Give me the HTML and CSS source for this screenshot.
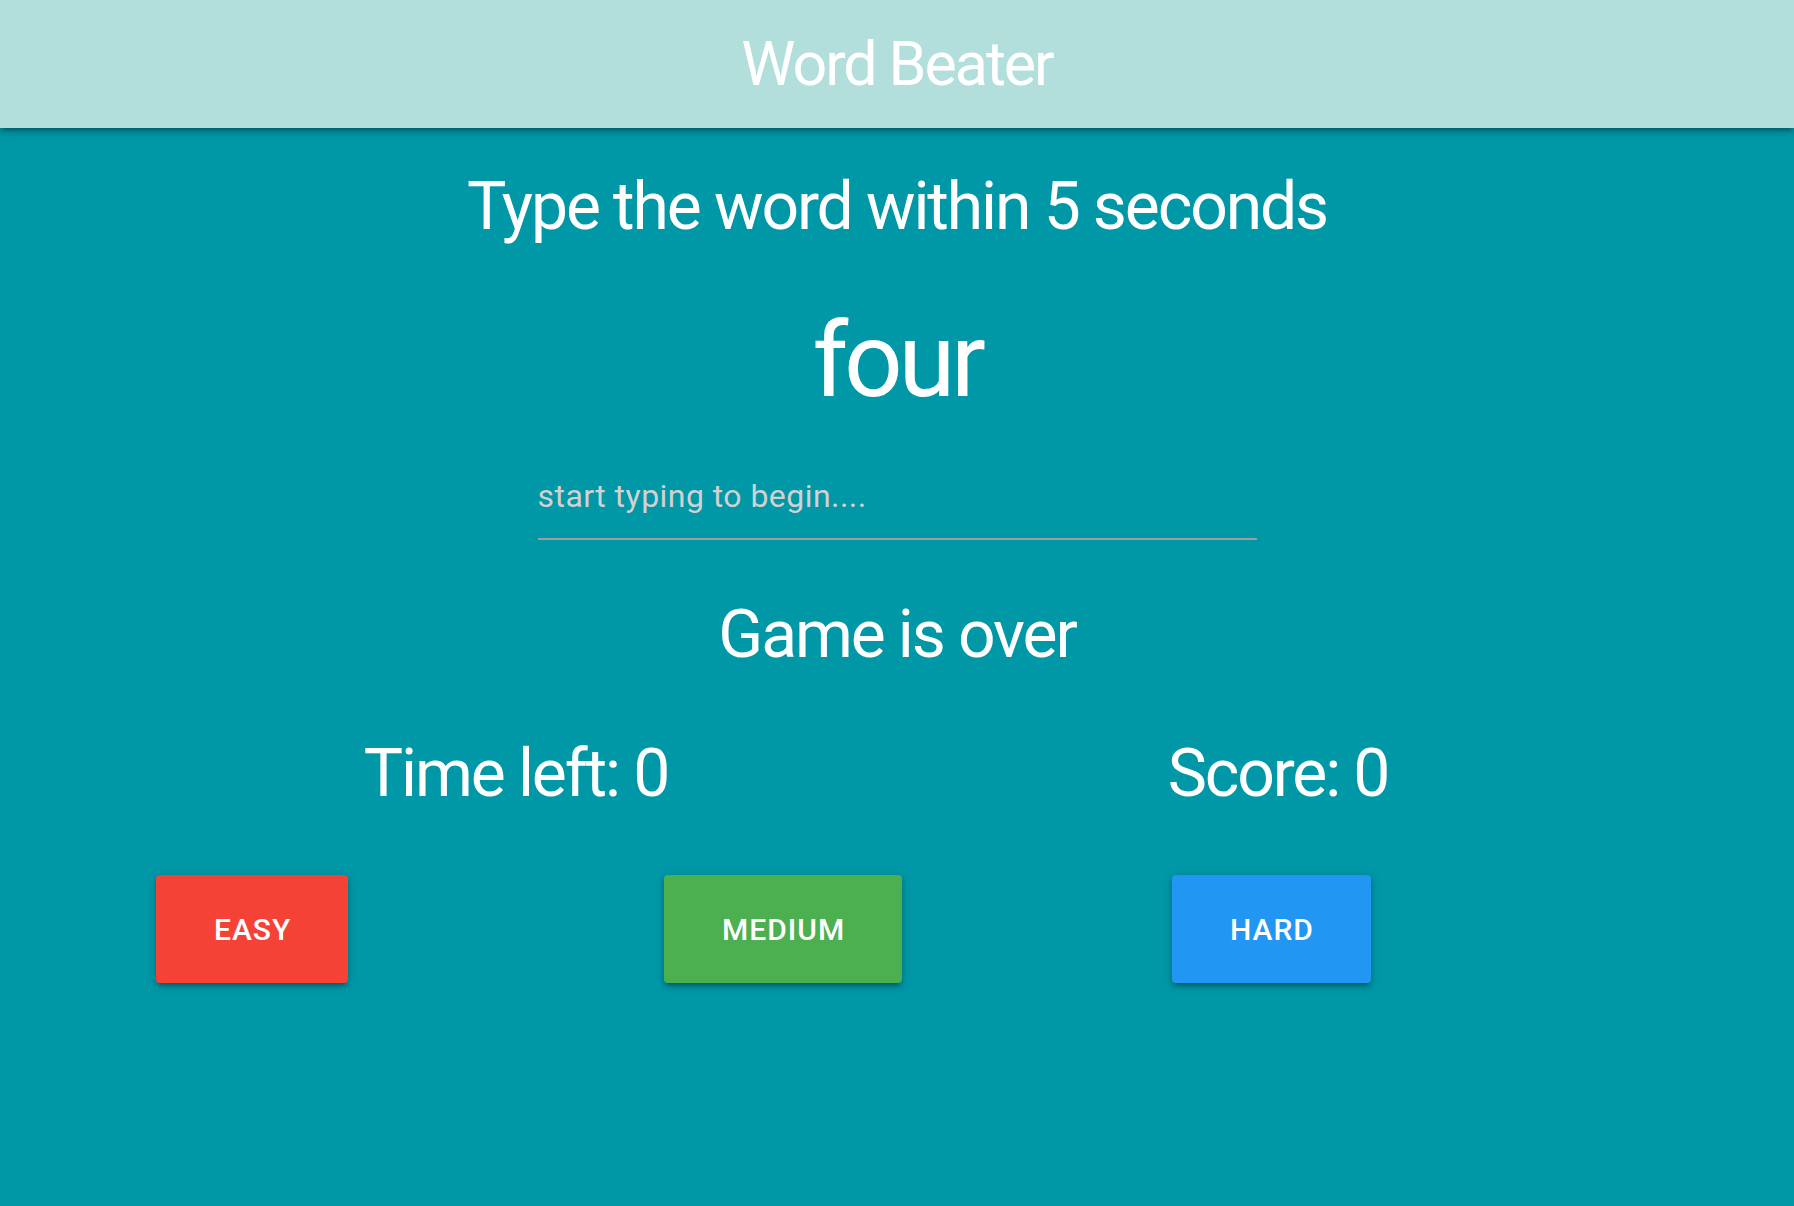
FILE: index.html
```html
<!DOCTYPE html>
<html lang="en">
<head>
<meta charset="utf-8">
<title>Word Beater</title>
<link rel="stylesheet" href="styles.css">
</head>
<body>
<header class="topbar">
  <div class="brand">Word Beater</div>
</header>
<main class="container">
  <h4 class="lead">Type the word within <span class="secs">5</span> seconds</h4>
  <h2 class="word">four</h2>
  <div class="input-row">
    <input class="word-input" type="text" placeholder="start typing to begin....">
  </div>
  <h4 class="message">Game is over</h4>
  <div class="stats">
    <h4 class="stat">Time left: <span>0</span></h4>
    <h4 class="stat">Score: <span>0</span></h4>
  </div>
  <div class="levels">
    <div class="level"><button class="btn btn-easy">Easy</button></div>
    <div class="level"><button class="btn btn-medium">Medium</button></div>
    <div class="level"><button class="btn btn-hard">Hard</button></div>
  </div>
</main>
</body>
</html>
```
FILE: styles.css
```css
* { box-sizing: border-box; }
html, body { margin: 0; padding: 0; }
body {
  background: #0097a7;
  color: #fff;
  font-family: Roboto, "Noto Sans", "Liberation Sans", sans-serif;
  min-height: 1206px;
}
.topbar {
  height: 128px;
  background: #b2dfdb;
  box-shadow: 0 4px 4px 0 rgba(0,0,0,0.14), 0 6px 2px -4px rgba(0,0,0,0.12), 0 2px 10px 0 rgba(0,0,0,0.2);
  position: relative;
  z-index: 1;
}
.brand {
  text-align: center;
  font-size: 61px;
  line-height: 128px;
  letter-spacing: -0.034em;
  color: #fff;
}
.container {
  width: 1524px;
  margin: 0 auto;
  text-align: center;
}
h4, h2 { font-weight: 400; margin: 0; }
.lead {
  font-size: 66px;
  line-height: 72px;
  letter-spacing: -0.032em;
  margin-top: 43px;
}
.word {
  font-size: 103px;
  line-height: 114px;
  letter-spacing: -0.042em;
  margin-top: 61px;
}
.input-row {
  margin-top: 35px;
  padding: 0 21.75px;
  display: flex;
  justify-content: center;
}
.word-input {
  width: 719px;
  height: 87px;
  background: transparent;
  border: none;
  border-bottom: 2px solid #9e9e9e;
  outline: none;
  padding: 0;
  font-family: inherit;
  font-size: 32px;
  letter-spacing: 0.45px;
  color: #fff;
}
.word-input::placeholder { color: #d1d1d1; }
.message {
  font-size: 66px;
  line-height: 72px;
  letter-spacing: -0.032em;
  margin-top: 59px;
}
.stats {
  display: grid;
  grid-template-columns: 1fr 1fr;
  margin-top: 67px;
}
.stat {
  font-size: 66px;
  line-height: 72px;
  letter-spacing: -0.032em;
}
.levels {
  display: grid;
  grid-template-columns: repeat(3, 1fr);
  margin-top: 65px;
  text-align: left;
}
.level { padding: 0 21px; }
.btn {
  height: 108px;
  padding: 0 57px 0 58px;
  border: none;
  border-radius: 4px;
  color: #fff;
  font-family: inherit;
  font-size: 30px;
  font-weight: 500;
  letter-spacing: 1px;
  text-transform: uppercase;
  box-shadow: 0 4px 4px 0 rgba(0,0,0,0.14), 0 6px 2px -4px rgba(0,0,0,0.12), 0 2px 10px 0 rgba(0,0,0,0.2);
  cursor: pointer;
}
.btn-easy { background: #f44336; }
.btn-medium { background: #4caf50; }
.btn-hard { background: #2196f3; }
```
